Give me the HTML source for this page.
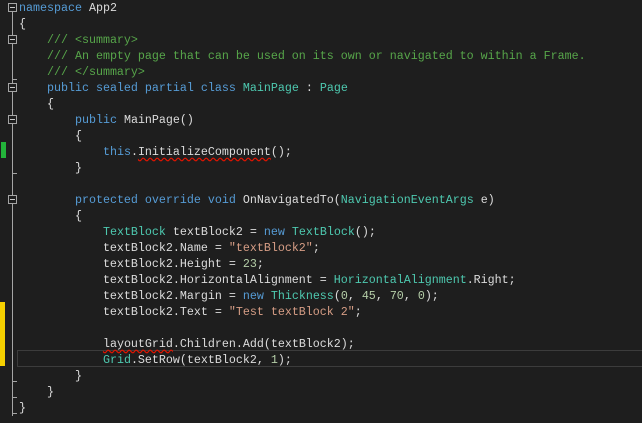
<!DOCTYPE html>
<html><head><meta charset="utf-8"><style>
html,body{margin:0;padding:0;background:#1e1e1e;width:642px;height:423px;overflow:hidden}
.l{position:absolute;left:19px;height:16px;line-height:16px;font-family:"Liberation Mono",monospace;font-size:11.67px;color:#dcdcdc;white-space:pre}
.k{color:#569cd6}.t{color:#4ec9b0}.c{color:#57a64a}.s{color:#d69d85}.n{color:#b5cea8}
.sq{text-decoration:underline wavy #e51400;text-decoration-skip-ink:none;text-underline-offset:2px}
.box{position:absolute;left:8px;width:7px;height:7px;border:1px solid #a5a5a5;background:#1e1e1e}
.box:after{content:"";position:absolute;left:1px;top:3px;width:5px;height:1px;background:#c8c8c8}
.vl{position:absolute;left:12px;width:1px;background:#a5a5a5}
.tk{position:absolute;left:12px;width:5px;height:1px;background:#a5a5a5}
</style></head><body>
<div style="position:absolute;left:17px;top:350px;width:640px;height:15px;border:1px solid #3c3c3c;background:#1e1e1e"></div>
<div style="position:absolute;left:0;top:302px;width:5px;height:64px;background:#f5d000"></div>
<div style="position:absolute;left:1px;top:142px;width:5px;height:16px;background:#23b33a"></div>
<div class="vl" style="top:12px;height:404px"></div>
<div class="tk" style="top:79px"></div>
<div class="tk" style="top:173px"></div>
<div class="tk" style="top:381px"></div>
<div class="tk" style="top:397px"></div>
<div class="tk" style="top:413px"></div>
<div class="box" style="top:3px"></div>
<div class="box" style="top:35px"></div>
<div class="box" style="top:83px"></div>
<div class="box" style="top:115px"></div>
<div class="box" style="top:195px"></div>
<div class="l" style="top:0"><span class="k">namespace</span> App2</div>
<div class="l" style="top:16px">{</div>
<div class="l" style="top:32px">    <span class="c">/// &lt;summary&gt;</span></div>
<div class="l" style="top:48px">    <span class="c">/// An empty page that can be used on its own or navigated to within a Frame.</span></div>
<div class="l" style="top:64px">    <span class="c">/// &lt;/summary&gt;</span></div>
<div class="l" style="top:80px">    <span class="k">public sealed partial class</span> <span class="t">MainPage</span> : <span class="t">Page</span></div>
<div class="l" style="top:96px">    {</div>
<div class="l" style="top:112px">        <span class="k">public</span> MainPage()</div>
<div class="l" style="top:128px">        {</div>
<div class="l" style="top:144px">            <span class="k">this</span>.<span class="sq">InitializeComponent</span>();</div>
<div class="l" style="top:160px">        }</div>
<div class="l" style="top:192px">        <span class="k">protected override void</span> OnNavigatedTo(<span class="t">NavigationEventArgs</span> e)</div>
<div class="l" style="top:208px">        {</div>
<div class="l" style="top:224px">            <span class="t">TextBlock</span> textBlock2 = <span class="k">new</span> <span class="t">TextBlock</span>();</div>
<div class="l" style="top:240px">            textBlock2.Name = <span class="s">"textBlock2"</span>;</div>
<div class="l" style="top:256px">            textBlock2.Height = <span class="n">23</span>;</div>
<div class="l" style="top:272px">            textBlock2.HorizontalAlignment = <span class="t">HorizontalAlignment</span>.Right;</div>
<div class="l" style="top:288px">            textBlock2.Margin = <span class="k">new</span> <span class="t">Thickness</span>(<span class="n">0</span>, <span class="n">45</span>, <span class="n">70</span>, <span class="n">0</span>);</div>
<div class="l" style="top:304px">            textBlock2.Text = <span class="s">"Test textBlock 2"</span>;</div>
<div class="l" style="top:336px">            <span class="sq">layoutGrid</span>.Children.Add(textBlock2);</div>
<div class="l" style="top:352px">            <span class="t">Grid</span>.SetRow(textBlock2, <span class="n">1</span>);</div>
<div class="l" style="top:368px">        }</div>
<div class="l" style="top:384px">    }</div>
<div class="l" style="top:400px">}</div>
</body></html>
